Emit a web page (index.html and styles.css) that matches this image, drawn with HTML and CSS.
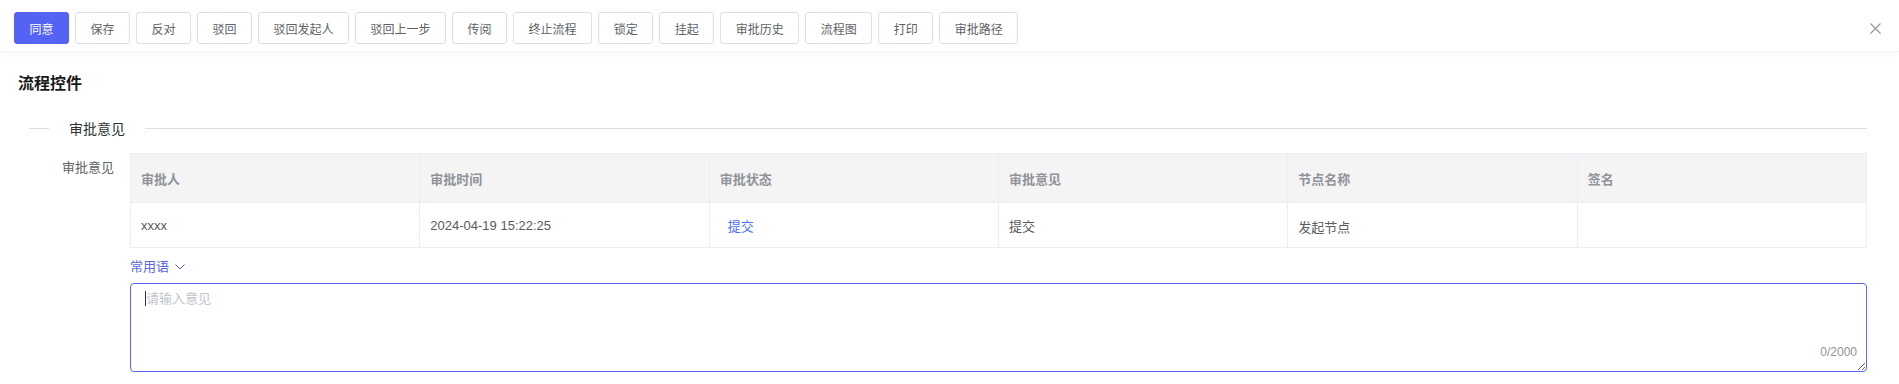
FILE: index.html
```html
<!DOCTYPE html>
<html lang="zh-CN">
<head>
    <meta charset="UTF-8">
    <title>流程控件</title>
    <link rel="stylesheet" href="styles.css">
</head>
<body>
    <!-- Toolbar -->
    <div class="toolbar">
        <div class="btns">
            <button class="btn btn-primary">同意</button>
            <button class="btn">保存</button>
            <button class="btn">反对</button>
            <button class="btn">驳回</button>
            <button class="btn">驳回发起人</button>
            <button class="btn">驳回上一步</button>
            <button class="btn">传阅</button>
            <button class="btn">终止流程</button>
            <button class="btn">锁定</button>
            <button class="btn">挂起</button>
            <button class="btn">审批历史</button>
            <button class="btn">流程图</button>
            <button class="btn">打印</button>
            <button class="btn">审批路径</button>
        </div>
        <span class="close">
            <svg width="11" height="11" viewBox="0 0 11 11"><path d="M0.5 0.5 L10.5 10.5 M10.5 0.5 L0.5 10.5" stroke="#909399" stroke-width="1.1" fill="none"/></svg>
        </span>
    </div>

    <div class="content">
        <h3 class="title">流程控件</h3>

        <div class="divider"><span>审批意见</span></div>

        <div class="form-item">
            <label class="form-label">审批意见</label>
            <div class="form-field">
                <table class="grid">
                    <thead>
                        <tr>
                            <th>审批人</th>
                            <th>审批时间</th>
                            <th>审批状态</th>
                            <th>审批意见</th>
                            <th>节点名称</th>
                            <th>签名</th>
                        </tr>
                    </thead>
                    <tbody>
                        <tr>
                            <td>xxxx</td>
                            <td>2024-04-19 15:22:25</td>
                            <td><span class="status">提交</span></td>
                            <td>提交</td>
                            <td class="low">发起节点</td>
                            <td></td>
                        </tr>
                    </tbody>
                </table>

                <div class="phrases">常用语
                    <svg width="10" height="6" viewBox="0 0 10 6"><path d="M0.5 0.5 L5 5 L9.5 0.5" stroke="#5a62f0" stroke-width="1" fill="none"/></svg>
                </div>

                <div class="textarea-wrap">
                    <textarea class="opinion" placeholder="请输入意见"></textarea>
                    <span class="caret"></span>
                    <span class="count">0/2000</span>
                </div>
            </div>
        </div>
    </div>
</body>
</html>
```

FILE: styles.css
```css
/* Page */
body, html {
    margin: 0;
    padding: 0;
    background: #fff;
    font-family: "Liberation Sans", "Noto Sans CJK SC", sans-serif;
    color: #303133;
}

/* Toolbar */
.toolbar {
    display: flex;
    justify-content: space-between;
    align-items: flex-start;
    height: 52px;
    box-sizing: border-box;
    padding: 12px 18px 0 14px;
    border-bottom: 1px solid #f3f3f3;
    box-shadow: 0 2px 6px rgba(0, 0, 0, 0.03);
}
.btns {
    display: flex;
    gap: 6px;
}
.btn {
    height: 32px;
    padding: 0 14.5px;
    border: 1px solid #dcdfe6;
    border-radius: 3px;
    background: #fff;
    color: #606266;
    font-family: inherit;
    font-size: 12px;
    cursor: pointer;
}
.btn-primary {
    background: #5563f5;
    border-color: #5563f5;
    color: #fff;
}
.close {
    display: flex;
    margin-top: 11px;
}

/* Content */
.content {
    padding: 20px 32px 0 18px;
}
.title {
    margin: 0;
    font-size: 16px;
    line-height: 24px;
    font-weight: bold;
    color: #1a1a1a;
}

/* Divider with left text */
.divider {
    display: flex;
    align-items: center;
    height: 16px;
    margin: 24px 0 0 11px;
    font-size: 14px;
    color: #303133;
}
.divider::before {
    content: '';
    width: 20px;
    border-top: 1px solid #dcdfe6;
}
.divider::after {
    content: '';
    flex: 1;
    border-top: 1px solid #dcdfe6;
}
.divider span {
    padding: 0 20px;
}

/* Form item */
.form-item {
    display: flex;
    margin-top: 17px;
}
.form-label {
    width: 112px;
    flex-shrink: 0;
    box-sizing: border-box;
    padding-right: 16px;
    text-align: right;
    font-size: 13px;
    line-height: 30px;
    color: #606266;
}
.form-field {
    flex: 1;
}

/* Table */
.grid {
    width: 100%;
    table-layout: fixed;
    border-collapse: collapse;
    border: 1px solid #ebeef5;
    font-size: 13px;
}
.grid th, .grid td {
    border: 1px solid #ebeef5;
    padding: 0 10px;
    text-align: left;
}
.grid th {
    height: 48px;
    background: #f4f4f5;
    color: #909399;
    font-weight: 600;
}
.grid td {
    height: 44px;
    color: #5a5a5a;
}
.grid td.low {
    height: 41px;
    padding-top: 3px;
}
.status {
    padding: 0 8px;
    color: #4d6ef5;
}

/* Common phrases */
.phrases {
    display: flex;
    align-items: center;
    gap: 6px;
    margin-top: 9px;
    font-size: 13px;
    line-height: 20px;
    color: #5a62f0;
}

/* Textarea */
.textarea-wrap {
    position: relative;
    margin-top: 6px;
}
.opinion {
    display: block;
    width: 100%;
    height: 89px;
    box-sizing: border-box;
    padding: 5px 15px;
    border: 1px solid #5b66f6;
    border-radius: 4px;
    outline: none;
    font-family: inherit;
    font-size: 13px;
    line-height: 20px;
    color: #606266;
}
.opinion::placeholder {
    color: #c0c4cc;
}
.caret {
    position: absolute;
    left: 15px;
    top: 8px;
    width: 1px;
    height: 15px;
    background: #333;
}
.count {
    position: absolute;
    right: 10px;
    bottom: 12px;
    font-size: 12px;
    line-height: 16px;
    color: #909399;
}
```
